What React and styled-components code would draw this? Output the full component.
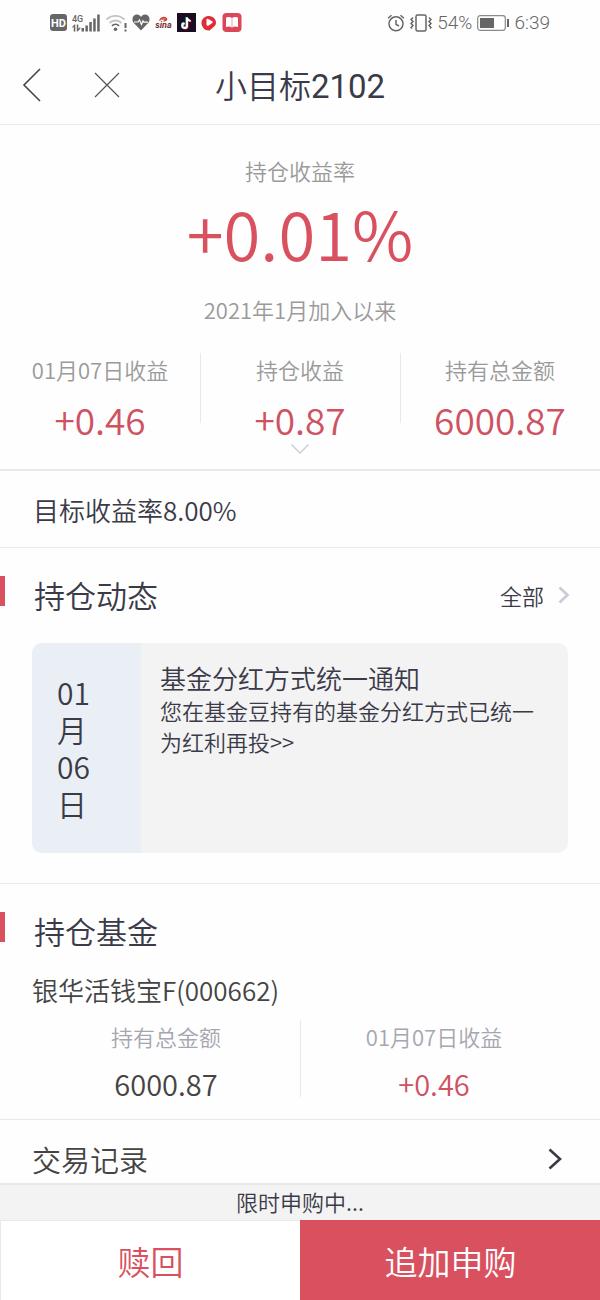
import React from "react";
import styled, { createGlobalStyle } from "styled-components";

const color = {
  red: "#d9505f",
  number: "#cf5262",
  ink: "#3a3a48",
  text: "#444444",
  muted: "#9a9a9a",
  faint: "#a6a6b0",
  line: "#e9e9e9",
  panel: "#f3f3f3",
  status: "#666666",
};

const GlobalStyle = createGlobalStyle`
  *, *::before, *::after { box-sizing: border-box; }
  body {
    margin: 0;
    background: #fefefe;
    color: ${color.ink};
    font-family: "Noto Sans CJK SC", sans-serif;
    font-weight: 350;
  }
  h1, h2, h3, p, dl, dt, dd { margin: 0; font-weight: inherit; }
  button { margin: 0; padding: 0; border: 0; background: none; font: inherit; color: inherit; cursor: pointer; }
  a { color: inherit; text-decoration: none; }
  svg { display: block; flex: none; }
`;

const Page = styled.div`
  min-height: 100vh;
  display: flex;
  flex-direction: column;
`;

const StatusBar = styled.div`
  height: 45px;
  padding: 0 50px;
  display: flex;
  align-items: center;
  justify-content: space-between;
  color: ${color.status};
  font: 350 19px/24px Roboto, sans-serif;
`;

const StatusGroup = styled.div`
  display: flex;
  align-items: center;
  gap: 5px;
`;

const NavBar = styled.header`
  height: 80px;
  padding: 0 20px;
  display: grid;
  grid-template-columns: 1fr auto 1fr;
  align-items: center;
  border-bottom: 1px solid ${color.line};
`;

const NavActions = styled.div`
  display: flex;
  align-items: center;
  gap: 46px;
`;

const NavTitle = styled.h1`
  padding-top: 2px;
  font-size: 32px;
  line-height: 48px;
`;

const NavNumber = styled.span`
  font-family: Roboto, sans-serif;
  font-size: 33px;
  font-weight: 400;
`;

const Hero = styled.section`
  padding: 29px 0 15px;
  display: flex;
  flex-direction: column;
  align-items: center;
  border-bottom: 2px solid ${color.line};
`;

const Caption = styled.p`
  font-size: 22px;
  line-height: 32px;
  color: ${color.muted};
`;

const Rate = styled.p`
  margin: 6px 0 21px;
  font-size: 67px;
  line-height: 80px;
  color: ${color.red};
`;

const Stats = styled.dl`
  align-self: stretch;
  margin-top: ${(p) => p.$top}px;
  padding: 0 ${(p) => p.$inset}px;
  display: flex;
`;

const Stat = styled.div`
  flex: 1 1 0;
  text-align: center;
`;

const Divider = styled.div`
  width: 1px;
  height: ${(p) => p.$height}px;
  margin: 0 -1px 0 0;
  background: ${color.line};
`;

const StatLabel = styled.dt`
  font-size: 22px;
  line-height: 32px;
  color: ${(p) => p.$color};
`;

const StatValue = styled.dd`
  padding-top: ${(p) => (p.$large ? 12 : 8)}px;
  font-size: ${(p) => (p.$large ? 37 : 29)}px;
  line-height: ${(p) => (p.$large ? 44 : 46)}px;
  color: ${(p) => p.$color};
`;

const Expand = styled.button`
  margin-top: 3px;
`;

const Target = styled.section`
  padding: 2px 33px 0;
  font-size: 26px;
  line-height: 74px;
  border-bottom: 1px solid ${color.line};
`;

const Section = styled.section`
  padding: 24px 0 ${(p) => p.$bottom}px;
  border-bottom: 1px solid ${color.line};
`;

const SectionHead = styled.div`
  padding-right: 30px;
  display: flex;
  align-items: center;
`;

const Marker = styled.span`
  align-self: flex-start;
  width: 5px;
  height: 30px;
  margin-top: 4px;
  background: ${color.red};
`;

const SectionTitle = styled.h2`
  flex: 1;
  padding-left: 29px;
  font-size: 31px;
  line-height: 46px;
`;

const MoreLink = styled.a`
  display: flex;
  align-items: center;
  gap: 14px;
  font-size: 22px;
  line-height: 32px;
`;

const Notice = styled.a`
  margin: 25px 32px 0;
  min-height: 210px;
  display: flex;
  border-radius: 10px;
  overflow: hidden;
  background: ${color.panel};
`;

const NoticeDate = styled.div`
  flex: 0 0 109px;
  padding: 0 44px 0 25px;
  display: flex;
  align-items: center;
  background: #e9eff4;
  font-size: 30px;
  line-height: 37px;
`;

const NoticeBody = styled.div`
  flex: 1;
  padding: 17px 20px 17px 19px;
`;

const NoticeTitle = styled.h3`
  font-size: 26px;
  line-height: 35px;
`;

const NoticeText = styled.p`
  font-size: 22px;
  line-height: 31px;
`;

const FundName = styled.h3`
  margin-top: 16px;
  padding: 0 32px;
  font-size: 26px;
  line-height: 40px;
  color: ${color.text};
`;

const RecordsLink = styled.a`
  padding: 18px 38px 3px 32px;
  display: flex;
  align-items: center;
  justify-content: space-between;
  font-size: 29px;
  line-height: 42px;
  color: ${color.text};
`;

const Footer = styled.footer`
  position: sticky;
  bottom: 0;
  margin-top: auto;
`;

const FooterNote = styled.p`
  padding-bottom: 2px;
  border-top: 2px solid #e8e8e8;
  background: ${color.panel};
  text-align: center;
  font-size: 22px;
  line-height: 33px;
`;

const FooterActions = styled.div`
  display: flex;
`;

const ActionButton = styled.button`
  && {
    flex: 1;
    height: 80px;
    font-size: 33px;
    background: ${(p) => (p.$primary ? color.red : "#ffffff")};
    color: ${(p) => (p.$primary ? "#ffffff" : color.red)};
    border: solid ${(p) => (p.$primary ? color.red : color.line)};
    border-width: 1px 0 0 1px;
  }
`;

const HdIcon = () => (
  <svg width="17" height="17" viewBox="0 0 17 17">
    <rect width="17" height="17" rx="3" fill={color.status} />
    <text x="8.5" y="12.5" textAnchor="middle" fontFamily="Roboto, sans-serif" fontWeight="700" fontSize="11" fill="#fff">HD</text>
  </svg>
);

const SignalIcon = () => (
  <svg width="29" height="20" viewBox="0 0 29 20" fill={color.status}>
    <text x="0" y="9" fontFamily="Roboto, sans-serif" fontWeight="500" fontSize="9">4G</text>
    <path d="M0 14l2.500-2.500h.8v7H1.700v-5L0 14.800zM4.800 11.500h1.500v4.200l2-1.700v1.800l-2.700 2.700h-.8zM9.500 15h2.500v3.500H9.500zM13.400 12.500h2.500v6h-2.500zM17.300 9h2.500v9.500h-2.500zM21.200 5.500h2.500v13h-2.500zM25.200 1.500h2.500v17h-2.500z" />
  </svg>
);

const WifiIcon = () => (
  <svg width="21" height="19" viewBox="0 0 21 19" fill="none" strokeWidth="1.800">
    <path d="M.5 6.500a13 13 0 0 1 18 0M3.500 10a8.500 8.500 0 0 1 12 0" stroke="#c4c4c4" />
    <path d="M6 12.800a5 5 0 0 1 7 0" stroke={color.status} />
    <circle cx="9.500" cy="16.200" r="1.800" fill={color.status} />
    <path d="M19.500 10v5M19.500 16.500v2" stroke={color.status} strokeWidth="2" />
  </svg>
);

const HeartIcon = () => (
  <svg width="18" height="17" viewBox="0 0 18 17">
    <path d="M9 16.500L1.600 8.800C-.5 6.200.2 1 4.600.6 6.600.4 8.100 1.400 9 3 9.900 1.400 11.400.4 13.400.6 17.800 1 18.500 6.200 16.400 8.800z" fill={color.status} />
    <path d="M2 8h4l1.500-2 2 4.500 1.500-3.500 1 1.200H16" fill="none" stroke="#fff" strokeWidth="1.200" />
  </svg>
);

const SinaIcon = () => (
  <svg width="17" height="14" viewBox="0 0 17 14">
    <path d="M4.500 4.500Q7.500-.5 11.500 2.500q1 2-3 2.500M6.500 3.500q3-1.500 4 .5" fill="none" stroke="#c93a32" strokeWidth="1.300" />
    <text x="8.500" y="11.500" textAnchor="middle" fontFamily="Roboto, sans-serif" fontStyle="italic" fontWeight="700" fontSize="9" fill="#74332f">sina</text>
  </svg>
);

const TiktokIcon = () => (
  <svg width="19" height="19" viewBox="0 0 19 19" fill="none" strokeWidth="1.900">
    <rect width="19" height="19" fill="#1c0c22" />
    <path d="M9.400 4v8.200a2.300 2.300 0 1 1-2.300-2.300M9.400 4.200c.3 2 1.600 3 3.600 3.200" stroke="#40d8d4" />
    <path d="M10.600 5v8.200a2.300 2.300 0 1 1-2.300-2.300M10.600 5.200c.3 2 1.600 3 3.600 3.200" stroke="#e8375e" />
    <path d="M10 4.500v8.200a2.300 2.300 0 1 1-2.300-2.300M10 4.700c.3 2 1.600 3 3.600 3.200" stroke="#fff" />
  </svg>
);

const VideoIcon = () => (
  <svg width="16" height="16" viewBox="0 0 16 16">
    <path d="M7 1a7 7 0 0 1 8 6.500c0 2-1 3.500-2.500 4.500l-4 3.500C4 16 .5 12 .5 8 .5 4.500 3.500 1.200 7 1z" fill="#e02c36" />
    <path d="M5.500 4.500q.5-1 1.700-.5l4 2.200q1.300.9 0 1.900l-4 2.600q-1.500.6-1.700-1z" fill="#fff" />
  </svg>
);

const BookIcon = () => (
  <svg width="20" height="19" viewBox="0 0 20 19">
    <rect x=".5" width="19" height="19" rx="4" fill="#db4658" />
    <path d="M4 4.500q3.500-1 6 .5 2.500-1.500 6-.5v9.500q-3.500-1-6 .6-2.500-1.600-6-.6z" fill="#fff" />
    <path d="M10 5v9.500" stroke="#e9a3a9" />
  </svg>
);

const AlarmIcon = () => (
  <svg width="18" height="18" viewBox="0 0 18 18" fill="none" stroke={color.status} strokeWidth="1.500">
    <circle cx="9" cy="9.800" r="7" />
    <path d="M9 6v4.300l3 1.700M1 4.200l3.500-3M17 4.200l-3.500-3" />
  </svg>
);

const VibrateIcon = () => (
  <svg width="22" height="18" viewBox="0 0 22 18" fill="none" stroke={color.status} strokeWidth="1.500">
    <rect x="6" y="1" width="10" height="16" rx="1.500" />
    <path d="M3 3.500l-2 2 2 2-2 2 2 2-2 2 1 1M19 3.500l2 2-2 2 2 2-2 2 2 2-1 1" />
  </svg>
);

const BatteryIcon = () => (
  <svg width="32" height="16" viewBox="0 0 32 16">
    <rect x=".7" y=".7" width="27.600" height="14.600" rx="2.500" fill="none" stroke="#8a8a8a" strokeWidth="1.200" />
    <rect x="3" y="3" width="14" height="10" fill={color.status} />
    <path d="M31 4v8" stroke={color.status} strokeWidth="2" />
  </svg>
);

const Stroke = ({ w, h, d, stroke, width }) => (
  <svg width={w} height={h} viewBox={`0 0 ${w} ${h}`} fill="none" stroke={stroke} strokeWidth={width} aria-hidden="true">
    <path d={d} />
  </svg>
);

export default function App() {
  return (
    <Page>
      <GlobalStyle />
      <StatusBar>
        <StatusGroup>
          <HdIcon />
          <SignalIcon />
          <WifiIcon />
          <HeartIcon />
          <SinaIcon />
          <TiktokIcon />
          <VideoIcon />
          <BookIcon />
        </StatusGroup>
        <StatusGroup>
          <AlarmIcon />
          <VibrateIcon />
          <span>54%</span>
          <BatteryIcon />
          <span>6:39</span>
        </StatusGroup>
      </StatusBar>

      <NavBar>
        <NavActions>
          <button aria-label="返回">
            <Stroke w={28} h={34} d="M20 1L4 17l16 16" stroke="#444" width={1.6} />
          </button>
          <button aria-label="关闭">
            <Stroke w={26} h={26} d="M1 1l24 24M25 1L1 25" stroke="#555" width={1.2} />
          </button>
        </NavActions>
        <NavTitle>
          小目标<NavNumber>2102</NavNumber>
        </NavTitle>
      </NavBar>

      <Hero>
        <Caption>持仓收益率</Caption>
        <Rate>+0.01%</Rate>
        <Caption>2021年1月加入以来</Caption>
        <Stats $top={28} $inset={0}>
          <Stat>
            <StatLabel $color={color.muted}>01月07日收益</StatLabel>
            <StatValue $large $color={color.number}>+0.46</StatValue>
          </Stat>
          <Divider $height={70} />
          <Stat>
            <StatLabel $color={color.muted}>持仓收益</StatLabel>
            <StatValue $large $color={color.number}>+0.87</StatValue>
          </Stat>
          <Divider $height={70} />
          <Stat>
            <StatLabel $color={color.muted}>持有总金额</StatLabel>
            <StatValue $large $color={color.number}>6000.87</StatValue>
          </Stat>
        </Stats>
        <Expand aria-label="展开">
          <Stroke w={20} h={10} d="M1.500 .5L10 9l8.500-8.500" stroke="#c9ccd2" width={1.4} />
        </Expand>
      </Hero>

      <Target>目标收益率8.00%</Target>

      <Section $bottom={30}>
        <SectionHead>
          <Marker />
          <SectionTitle>持仓动态</SectionTitle>
          <MoreLink href="#updates">
            全部
            <Stroke w={12} h={18} d="M1.500 1.500L9.500 9l-8 7.500" stroke="#cacad8" width={2.6} />
          </MoreLink>
        </SectionHead>
        <Notice href="#notice">
          <NoticeDate>01月06日</NoticeDate>
          <NoticeBody>
            <NoticeTitle>基金分红方式统一通知</NoticeTitle>
            <NoticeText>您在基金豆持有的基金分红方式已统一为红利再投&gt;&gt;</NoticeText>
          </NoticeBody>
        </Notice>
      </Section>

      <Section $bottom={13}>
        <SectionHead>
          <Marker />
          <SectionTitle>持仓基金</SectionTitle>
        </SectionHead>
        <FundName>银华活钱宝F(000662)</FundName>
        <Stats $top={10} $inset={32}>
          <Stat>
            <StatLabel $color={color.faint}>持有总金额</StatLabel>
            <StatValue $color={color.text}>6000.87</StatValue>
          </Stat>
          <Divider $height={77} />
          <Stat>
            <StatLabel $color={color.faint}>01月07日收益</StatLabel>
            <StatValue $color={color.number}>+0.46</StatValue>
          </Stat>
        </Stats>
      </Section>

      <RecordsLink href="#records">
        交易记录
        <Stroke w={14} h={22} d="M1.500 1.500L12 11 1.500 20.500" stroke={color.ink} width={2.6} />
      </RecordsLink>

      <Footer>
        <FooterNote>限时申购中...</FooterNote>
        <FooterActions>
          <ActionButton>赎回</ActionButton>
          <ActionButton $primary>追加申购</ActionButton>
        </FooterActions>
      </Footer>
    </Page>
  );
}
